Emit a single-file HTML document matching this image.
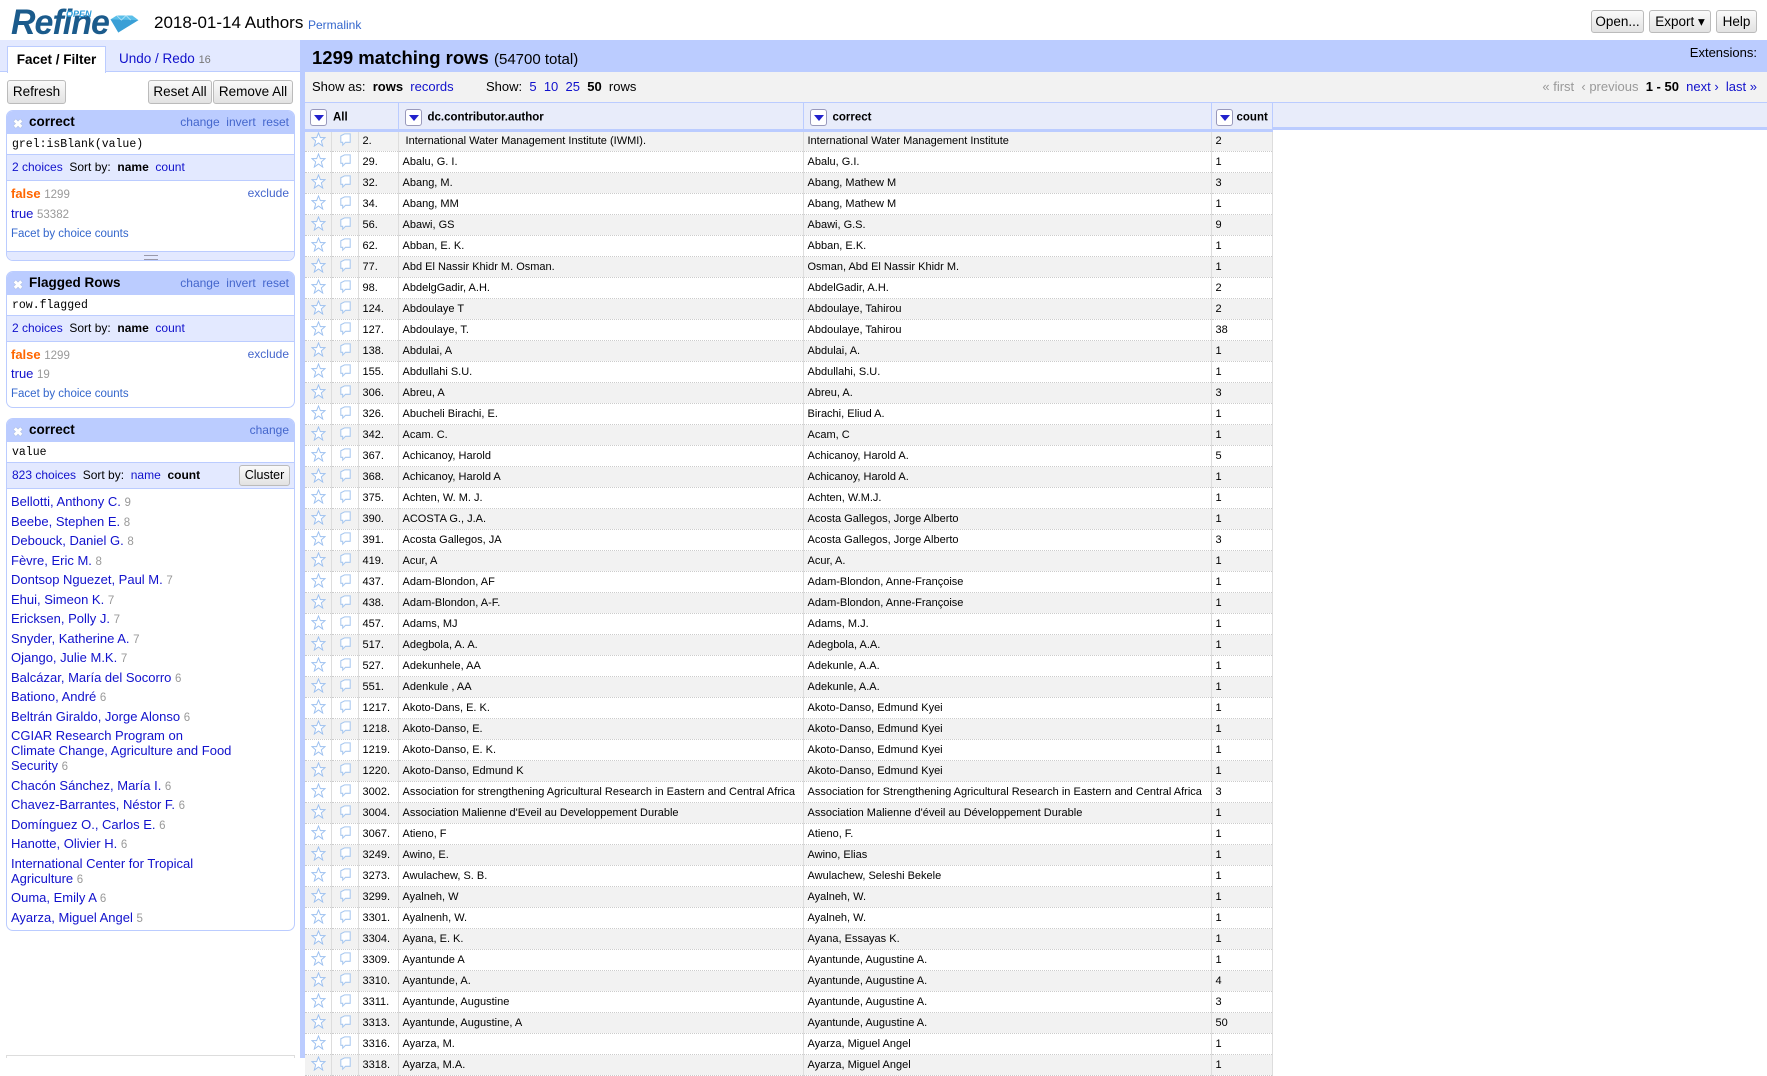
<!DOCTYPE html>
<html><head><meta charset="utf-8">
<style>
*{box-sizing:border-box;margin:0;padding:0}
body{width:1767px;height:1058px;overflow:hidden;background:#fff;font-family:"Liberation Sans",Arial,sans-serif;position:relative;color:#000}
a,.lk{color:#11c;text-decoration:none}
.abs{position:absolute}
.btn{position:absolute;border:1px solid #bbb;border-radius:3px;background:linear-gradient(#fafafa,#e2e2e2);font-size:13.5px;text-align:center;line-height:21px;height:23px}
.facet{position:absolute;left:6px;width:289px;border:1px solid #bcf;border-radius:7px;overflow:hidden;background:#fff}
.fh{background:#bbccff;height:22px;font-size:13.5px;font-weight:bold;line-height:22px;padding-left:22px;position:relative}
.fh .x{position:absolute;left:6px;top:2px;color:#fff;font-size:12px;text-shadow:0 0 1px #89a}
.fh .r{position:absolute;right:5px;top:0;font-weight:normal;font-size:12px;color:#46c}
.ex{height:22px;border-top:1px solid #bcf;border-bottom:1px solid #bcf;font-family:"Liberation Mono",monospace;font-size:11.5px;line-height:21px;padding-left:5px}
.ch{background:#e3e9ff;height:26px;font-size:12px;line-height:25px;padding-left:5px;border-bottom:1px solid #bcf;position:relative}
.cnt{color:#999;font-size:11.5px}
.grip{height:10px;background:#e3e9ff;border-top:1px solid #bcf;position:relative}
.grip:after{content:"";position:absolute;left:137px;top:3px;width:14px;height:3px;border-top:1px solid #99a;border-bottom:1px solid #99a}
.list div{margin-bottom:4.5px}
.list .cnt{line-height:0}
table{border-collapse:collapse;table-layout:fixed;position:absolute;left:305px;top:103px;font-size:11px}
th{background:#e8ecfa;height:27px;text-align:left;font-weight:bold;font-size:11.5px;border-right:1px solid #bcf;border-bottom:3px solid #bcf;padding-left:6px;padding-top:3px;white-space:nowrap}
td{height:21px;border-right:1px solid #ddd;border-bottom:1px dotted #ccc;padding-left:4px;white-space:nowrap;overflow:hidden}
tr:nth-child(odd) td{background:#f2f2f2}
.dd{display:inline-block;width:17px;height:17px;border:1px solid #99b;border-radius:3px;background:#fff;vertical-align:middle;margin-right:6px;position:relative}
.dd:after{content:"";position:absolute;left:3px;top:5px;border-left:5px solid transparent;border-right:5px solid transparent;border-top:6px solid #22c}
td.s,td.f{padding-left:6px}
</style></head><body>
<!-- header -->
<div class="abs" style="left:11px;top:3px;font-size:35px;font-weight:bold;font-style:italic;color:#1b5b8c;letter-spacing:-1px;transform:scaleX(0.97);transform-origin:left">Refine</div>
<div class="abs" style="left:66px;top:9px;font-size:9px;font-weight:bold;font-style:italic;color:#2a9ad8">OPEN</div>
<svg class="abs" style="left:109px;top:12px" width="31" height="24" viewBox="0 0 40 24"><polygon points="2,6 10,1 30,1 38,7 12,23" fill="#5bbfe9"/><polygon points="2,6 38,7 12,23" fill="#3a9fd6"/><polyline points="10,1 16,7 22,1 28,7" fill="none" stroke="#bfe6f8" stroke-width="1"/></svg>
<div class="abs" style="left:154px;top:13px;font-size:17px">2018-01-14 Authors</div>
<div class="abs lk" style="left:308px;top:18px;font-size:12px;color:#36c">Permalink</div>
<div class="btn" style="left:1591px;top:10px;width:53px">Open...</div>
<div class="btn" style="left:1649px;top:10px;width:62px">Export ▾</div>
<div class="btn" style="left:1716px;top:10px;width:41px">Help</div>

<!-- left panel -->
<div class="abs" style="left:0;top:40px;width:300px;height:1018px;background:#fff"></div>
<div class="abs" style="left:0;top:40px;width:300px;height:32px;background:#e3e9ff;border-bottom:1px solid #bcf"></div>
<div class="abs" style="left:7px;top:46px;width:99px;height:27px;background:#fff;border:1px solid #bcf;border-bottom:none;font-size:13.5px;font-weight:bold;text-align:center;line-height:26px">Facet / Filter</div>
<div class="abs" style="left:119px;top:51px;font-size:13.5px;color:#11c">Undo / Redo <span style="color:#777;font-size:11px">16</span></div>
<div class="btn" style="left:7px;top:80px;width:59px;height:24px;line-height:22px">Refresh</div>
<div class="btn" style="left:148px;top:80px;width:64px;height:24px;line-height:22px">Reset All</div>
<div class="btn" style="left:213px;top:80px;width:80px;height:24px;line-height:22px">Remove All</div>
<div class="abs" style="left:300px;top:40px;width:5px;height:1018px;background:#bcf"></div>
<div class="abs" style="left:6px;top:1055px;width:289px;height:3px;border:1px solid #ddd;border-bottom:none"></div>

<div class="facet" style="top:110px;height:151px">
<div class="fh"><span class="x">✖</span>correct<span class="r">change&nbsp; invert&nbsp; reset</span></div>
<div class="ex">grel:isBlank(value)</div>
<div class="ch"><span class="lk">2 choices</span>&nbsp; Sort by:&nbsp; <b>name</b>&nbsp; <span class="lk">count</span></div>
<div style="height:70px;position:relative;font-size:13px">
<div class="abs" style="left:4px;top:5px"><b style="color:#f60">false</b> <span class="cnt">1299</span></div>
<div class="abs" style="right:5px;top:5px;font-size:12px;color:#46c">exclude</div>
<div class="abs" style="left:4px;top:25px;color:#11c">true <span class="cnt">53382</span></div>
<div class="abs" style="left:4px;top:47px;font-size:11.5px;color:#36c">Facet by choice counts</div>
</div>
<div class="grip"></div>
</div>

<div class="facet" style="top:271px;height:137px">
<div class="fh"><span class="x">✖</span>Flagged Rows<span class="r">change&nbsp; invert&nbsp; reset</span></div>
<div class="ex">row.flagged</div>
<div class="ch"><span class="lk">2 choices</span>&nbsp; Sort by:&nbsp; <b>name</b>&nbsp; <span class="lk">count</span></div>
<div style="height:64px;position:relative;font-size:13px">
<div class="abs" style="left:4px;top:5px"><b style="color:#f60">false</b> <span class="cnt">1299</span></div>
<div class="abs" style="right:5px;top:5px;font-size:12px;color:#46c">exclude</div>
<div class="abs" style="left:4px;top:24px;color:#11c">true <span class="cnt">19</span></div>
<div class="abs" style="left:4px;top:46px;font-size:11.5px;color:#36c">Facet by choice counts</div>
</div>
</div>

<div class="facet" style="top:418px;height:513px">
<div class="fh"><span class="x">✖</span>correct<span class="r">change</span></div>
<div class="ex">value</div>
<div class="ch"><span class="lk">823 choices</span>&nbsp; Sort by:&nbsp; <span class="lk">name</span>&nbsp; <b>count</b>
<div class="btn" style="right:4px;top:2px;width:51px;height:21px;line-height:19px;font-size:12.5px">Cluster</div></div>
<div class="list" style="height:452px;padding:5px 4px 0;font-size:13px;color:#11c;line-height:15px;overflow:hidden">
<div>Bellotti, Anthony C. <span class="cnt">9</span></div>
<div>Beebe, Stephen E. <span class="cnt">8</span></div>
<div>Debouck, Daniel G. <span class="cnt">8</span></div>
<div>Fèvre, Eric M. <span class="cnt">8</span></div>
<div>Dontsop Nguezet, Paul M. <span class="cnt">7</span></div>
<div>Ehui, Simeon K. <span class="cnt">7</span></div>
<div>Ericksen, Polly J. <span class="cnt">7</span></div>
<div>Snyder, Katherine A. <span class="cnt">7</span></div>
<div>Ojango, Julie M.K. <span class="cnt">7</span></div>
<div>Balcázar, María del Socorro <span class="cnt">6</span></div>
<div>Bationo, André <span class="cnt">6</span></div>
<div>Beltrán Giraldo, Jorge Alonso <span class="cnt">6</span></div>
<div>CGIAR Research Program on<br>Climate Change, Agriculture and Food<br>Security <span class="cnt">6</span></div>
<div>Chacón Sánchez, María I. <span class="cnt">6</span></div>
<div>Chavez-Barrantes, Néstor F. <span class="cnt">6</span></div>
<div>Domínguez O., Carlos E. <span class="cnt">6</span></div>
<div>Hanotte, Olivier H. <span class="cnt">6</span></div>
<div>International Center for Tropical<br>Agriculture <span class="cnt">6</span></div>
<div>Ouma, Emily A <span class="cnt">6</span></div>
<div>Ayarza, Miguel Angel <span class="cnt">5</span></div>
</div>
<div class="grip"></div>
</div>

<!-- right -->
<div class="abs" style="left:305px;top:40px;width:1462px;height:32px;background:#bbccff"></div>
<div class="abs" style="left:312px;top:47px;font-size:18.5px"><b>1299 matching rows</b> <span style="font-size:15px">(54700 total)</span></div>
<div class="abs" style="right:10px;top:45px;font-size:13px">Extensions:</div>
<div class="abs" style="left:305px;top:72px;width:1462px;height:31px;background:#f2f2f2;border-bottom:1px solid #bcf"></div>
<div class="abs" style="left:312px;top:79px;font-size:13px">Show as:&nbsp; <b>rows</b>&nbsp; <span class="lk">records</span></div>
<div class="abs" style="left:486px;top:79px;font-size:13px">Show:&nbsp; <span class="lk">5</span>&nbsp; <span class="lk">10</span>&nbsp; <span class="lk">25</span>&nbsp; <b>50</b>&nbsp; rows</div>
<div class="abs" style="right:10px;top:79px;font-size:13px;color:#999">« first&nbsp; ‹ previous&nbsp; <b style="color:#000">1 - 50</b>&nbsp; <span class="lk">next ›</span>&nbsp; <span class="lk">last »</span></div>
<div class="abs" style="left:1272px;top:103px;width:495px;height:27px;background:#e8ecfa;border-bottom:3px solid #bcf"></div>

<svg width="0" height="0" style="position:absolute"><defs>
<symbol id="st" viewBox="0 0 16 16"><polygon points="8,1 10,6 15,6 11,9.5 12.5,15 8,11.7 3.5,15 5,9.5 1,6 6,6" fill="#fff" stroke="#9cc0f0" stroke-width="1"/></symbol>
<symbol id="fl" viewBox="0 0 16 16"><path d="M3,4 L7,2 H13 L13,11 H8 L5,14 L5,11 H3 Z" fill="#fff" stroke="#a8c8f0" stroke-width="1.1"/></symbol>
</defs></svg>

<table>
<colgroup><col style="width:26px"><col style="width:27px"><col style="width:40px"><col style="width:405px"><col style="width:408px"><col style="width:61px"></colgroup>
<thead><tr><th colspan="3" style="padding-left:5px"><span class="dd"></span>All</th><th><span class="dd"></span>dc.contributor.author</th><th><span class="dd"></span>correct</th><th style="padding-left:4px"><span class="dd" style="margin-right:4px"></span>count</th></tr></thead>
<tbody id="tb">
<tr><td class="s"><svg width="15" height="15"><use href="#st"/></svg></td><td class="f"><svg width="15" height="15"><use href="#fl"/></svg></td><td>2.</td><td>&nbsp;International Water Management Institute (IWMI).</td><td>International Water Management Institute</td><td>2</td></tr>
</tbody></table>
<script>
var d=[["29.","Abalu, G. I.","Abalu, G.I.","1"],["32.","Abang, M.","Abang, Mathew M","3"],["34.","Abang, MM","Abang, Mathew M","1"],["56.","Abawi, GS","Abawi, G.S.","9"],["62.","Abban, E. K.","Abban, E.K.","1"],["77.","Abd El Nassir Khidr M. Osman.","Osman, Abd El Nassir Khidr M.","1"],["98.","AbdelgGadir, A.H.","AbdelGadir, A.H.","2"],["124.","Abdoulaye T","Abdoulaye, Tahirou","2"],["127.","Abdoulaye, T.","Abdoulaye, Tahirou","38"],["138.","Abdulai, A","Abdulai, A.","1"],["155.","Abdullahi S.U.","Abdullahi, S.U.","1"],["306.","Abreu, A","Abreu, A.","3"],["326.","Abucheli Birachi, E.","Birachi, Eliud A.","1"],["342.","Acam. C.","Acam, C","1"],["367.","Achicanoy, Harold","Achicanoy, Harold A.","5"],["368.","Achicanoy, Harold A","Achicanoy, Harold A.","1"],["375.","Achten, W. M. J.","Achten, W.M.J.","1"],["390.","ACOSTA G., J.A.","Acosta Gallegos, Jorge Alberto","1"],["391.","Acosta Gallegos, JA","Acosta Gallegos, Jorge Alberto","3"],["419.","Acur, A","Acur, A.","1"],["437.","Adam-Blondon, AF","Adam-Blondon, Anne-Françoise","1"],["438.","Adam-Blondon, A-F.","Adam-Blondon, Anne-Françoise","1"],["457.","Adams, MJ","Adams, M.J.","1"],["517.","Adegbola, A. A.","Adegbola, A.A.","1"],["527.","Adekunhele, AA","Adekunle, A.A.","1"],["551.","Adenkule , AA","Adekunle, A.A.","1"],["1217.","Akoto-Dans, E. K.","Akoto-Danso, Edmund Kyei","1"],["1218.","Akoto-Danso, E.","Akoto-Danso, Edmund Kyei","1"],["1219.","Akoto-Danso, E. K.","Akoto-Danso, Edmund Kyei","1"],["1220.","Akoto-Danso, Edmund K","Akoto-Danso, Edmund Kyei","1"],["3002.","Association for strengthening Agricultural Research in Eastern and Central Africa","Association for Strengthening Agricultural Research in Eastern and Central Africa","3"],["3004.","Association Malienne d'Eveil au Developpement Durable","Association Malienne d'éveil au Développement Durable","1"],["3067.","Atieno, F","Atieno, F.","1"],["3249.","Awino, E.","Awino, Elias","1"],["3273.","Awulachew, S. B.","Awulachew, Seleshi Bekele","1"],["3299.","Ayalneh, W","Ayalneh, W.","1"],["3301.","Ayalnenh, W.","Ayalneh, W.","1"],["3304.","Ayana, E. K.","Ayana, Essayas K.","1"],["3309.","Ayantunde A","Ayantunde, Augustine A.","1"],["3310.","Ayantunde, A.","Ayantunde, Augustine A.","4"],["3311.","Ayantunde, Augustine","Ayantunde, Augustine A.","3"],["3313.","Ayantunde, Augustine, A","Ayantunde, Augustine A.","50"],["3316.","Ayarza, M.","Ayarza, Miguel Angel","1"],["3318.","Ayarza, M.A.","Ayarza, Miguel Angel","1"]];
var h="";d.forEach(function(r){h+='<tr><td class="s"><svg width="15" height="15"><use href="#st"/></svg></td><td class="f"><svg width="15" height="15"><use href="#fl"/></svg></td><td>'+r[0]+'</td><td>'+r[1]+'</td><td>'+r[2]+'</td><td>'+r[3]+'</td></tr>';});
document.getElementById("tb").insertAdjacentHTML("beforeend",h);
</script>
</body></html>
